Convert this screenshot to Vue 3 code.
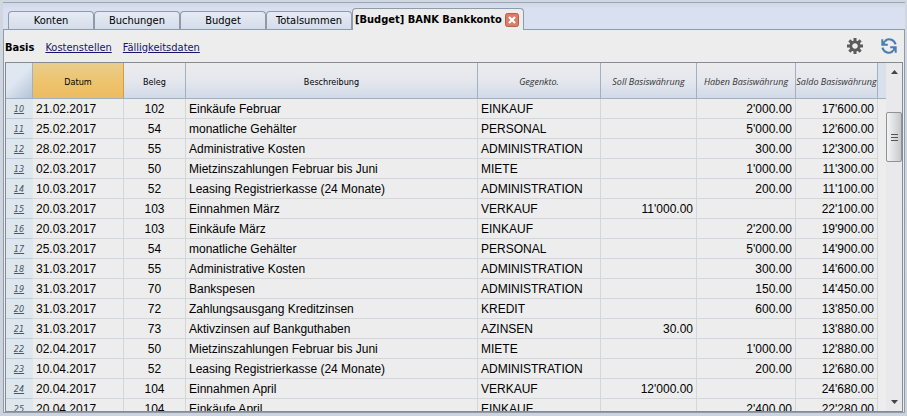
<script setup>
import { ref } from 'vue'

const tabs = ['Konten', 'Buchungen', 'Budget', 'Totalsummen']
const active = ref('[Budget] BANK Bankkonto')

const rows = [
  [10, '21.02.2017', '102', 'Einkäufe Februar', 'EINKAUF', '', "2'000.00", "17'600.00"],
  [11, '25.02.2017', '54', 'monatliche Gehälter', 'PERSONAL', '', "5'000.00", "12'600.00"],
  [12, '28.02.2017', '55', 'Administrative Kosten', 'ADMINISTRATION', '', '300.00', "12'300.00"],
  [13, '02.03.2017', '50', 'Mietzinszahlungen Februar bis Juni', 'MIETE', '', "1'000.00", "11'300.00"],
  [14, '10.03.2017', '52', 'Leasing Registrierkasse (24 Monate)', 'ADMINISTRATION', '', '200.00', "11'100.00"],
  [15, '20.03.2017', '103', 'Einnahmen März', 'VERKAUF', "11'000.00", '', "22'100.00"],
  [16, '20.03.2017', '103', 'Einkäufe März', 'EINKAUF', '', "2'200.00", "19'900.00"],
  [17, '25.03.2017', '54', 'monatliche Gehälter', 'PERSONAL', '', "5'000.00", "14'900.00"],
  [18, '31.03.2017', '55', 'Administrative Kosten', 'ADMINISTRATION', '', '300.00', "14'600.00"],
  [19, '31.03.2017', '70', 'Bankspesen', 'ADMINISTRATION', '', '150.00', "14'450.00"],
  [20, '31.03.2017', '72', 'Zahlungsausgang Kreditzinsen', 'KREDIT', '', '600.00', "13'850.00"],
  [21, '31.03.2017', '73', 'Aktivzinsen auf Bankguthaben', 'AZINSEN', '30.00', '', "13'880.00"],
  [22, '02.04.2017', '50', 'Mietzinszahlungen Februar bis Juni', 'MIETE', '', "1'000.00", "12'880.00"],
  [23, '10.04.2017', '52', 'Leasing Registrierkasse (24 Monate)', 'ADMINISTRATION', '', '200.00', "12'680.00"],
  [24, '20.04.2017', '104', 'Einnahmen April', 'VERKAUF', "12'000.00", '', "24'680.00"],
  [25, '20.04.2017', '104', 'Einkäufe April', 'EINKAUF', '', "2'400.00", "22'280.00"]
]
</script>

<template>
  <div class="window">
    <nav class="tabs">
      <button v-for="t in tabs" :key="t" type="button" class="tab">{{ t }}</button>
      <div class="tab current">
        <button type="button" class="label">{{ active }}</button>
        <button type="button" class="close">
          <svg viewBox="0 0 14 14" width="14" height="14">
            <rect x="0.5" y="0.5" width="13" height="13" rx="2" fill="#dc7d68" stroke="#bd5b48" />
            <path d="M4 4l6 6M10 4l-6 6" stroke="#fff" stroke-width="2.2" />
          </svg>
        </button>
      </div>
    </nav>

    <main class="panel">
      <header class="toolbar">
        <strong>Basis</strong>
        <a href="#kostenstellen">Kostenstellen</a>
        <a href="#faelligkeit">Fälligkeitsdaten</a>
        <span class="spacer"></span>
        <button type="button" class="tool">
          <svg viewBox="-8 -8 16 16" width="16" height="16">
            <g fill="#5c5c5c">
              <rect v-for="a in 8" :key="a" x="-1.5" y="-8" width="3" height="5" :transform="`rotate(${a * 45})`" />
            </g>
            <circle r="4.2" fill="none" stroke="#5c5c5c" stroke-width="2.8" />
          </svg>
        </button>
        <button type="button" class="tool">
          <svg viewBox="0 0 16 16" width="16" height="16">
            <g fill="none" stroke="#4a7fae" stroke-width="2">
              <path d="M4.6 2.4C8.4 0 13.2 1.6 14.6 6.4" />
              <path d="M11.4 13.6C7.6 16 2.8 14.4 1.4 9.6" />
              <path d="M1.3 1.2V6.7H6.8" />
              <path d="M14.7 14.8V9.3H9.2" />
            </g>
            <path d="M1 6.8L1.6 4 4.8 1.4 6 3 3.6 4.8 5 7z" fill="#4a7fae" />
            <path d="M15 9.2L14.4 12 11.2 14.6 10 13 12.4 11.2 11 9z" fill="#4a7fae" />
          </svg>
        </button>
      </header>

      <section class="grid">
        <div class="sheet">
          <table>
            <colgroup>
              <col class="c-num" /><col class="c-date" /><col class="c-doc" /><col />
              <col class="c-acc" /><col class="c-debit" /><col class="c-credit" /><col class="c-bal" /><col class="c-end" />
            </colgroup>
            <thead>
              <tr>
                <th class="corner"></th>
                <th class="picked">Datum</th>
                <th>Beleg</th>
                <th>Beschreibung</th>
                <th class="calc">Gegenkto.</th>
                <th class="calc">Soll Basiswährung</th>
                <th class="calc">Haben Basiswährung</th>
                <th class="calc">Saldo Basiswährung</th>
                <th class="end"></th>
              </tr>
            </thead>
            <tbody>
              <tr v-for="r in rows" :key="r[0]">
                <td class="num">{{ r[0] }}</td>
                <td>{{ r[1] }}</td>
                <td class="mid">{{ r[2] }}</td>
                <td>{{ r[3] }}</td>
                <td>{{ r[4] }}</td>
                <td class="amount">{{ r[5] }}</td>
                <td class="amount">{{ r[6] }}</td>
                <td class="amount">{{ r[7] }}</td>
                <td class="end"></td>
              </tr>
            </tbody>
          </table>
        </div>
        <div class="scrollbar">
          <button type="button" class="arrow"><svg viewBox="0 0 7 4" width="7" height="4"><path d="M0 4h7L3.5 0z" fill="#444" /></svg></button>
          <div class="track">
            <div class="thumb"><i></i><i></i><i></i></div>
          </div>
          <button type="button" class="arrow"><svg viewBox="0 0 7 4" width="7" height="4"><path d="M0 0h7L3.5 4z" fill="#444" /></svg></button>
        </div>
      </section>
    </main>
  </div>
</template>

<style>
body {
  background: #ccd3dc;
}
</style>

<style scoped>
.window {
  box-sizing: border-box;
  height: 100vh;
  display: flex;
  flex-direction: column;
  padding: 2px 2px 3px 3px;
  background: linear-gradient(#d0d7e0, #ccd3dc);
  font-family: "DejaVu Sans Condensed", "DejaVu Sans", sans-serif;
  font-size: 11px;
  color: #000;
}
button {
  font: inherit;
  color: inherit;
  background: none;
  border: 0;
  padding: 0;
}
.tabs {
  flex: none;
  display: flex;
  align-items: flex-end;
  height: 26px;
  padding-left: 5px;
  border-top: 1px solid #9ba7b5;
  background: linear-gradient(#cfd8e4, #d9e0f0 6px);
}
.tab {
  box-sizing: border-box;
  width: 86px;
  height: 18px;
  border: 1px solid #8e9bab;
  border-bottom: 0;
  border-radius: 4px 4px 0 0;
  background: linear-gradient(#e6ebf3, #d5ddeb);
  line-height: 18px;
  text-align: center;
  white-space: nowrap;
}
.tab.current {
  display: flex;
  align-items: center;
  justify-content: space-between;
  width: 172px;
  height: 22px;
  padding: 0 4px 0 2px;
  margin-bottom: -1px;
  background: #ededed;
  position: relative;
}
.label {
  font-weight: bold;
  line-height: 20px;
}
.close,
.tool {
  display: flex;
}
.panel {
  flex: 1;
  min-height: 0;
  display: flex;
  flex-direction: column;
  border: 1px solid #8e9bab;
  background: #ededed;
}
.toolbar {
  flex: none;
  display: flex;
  align-items: center;
  gap: 11px;
  height: 32px;
  padding: 0 7px 0 1px;
}
.toolbar strong,
.toolbar a {
  padding-top: 2px;
}
.toolbar a {
  color: #15156e;
}
.spacer {
  flex: 1;
}
.tool + .tool {
  margin-left: 7px;
}
.grid {
  flex: 1;
  min-height: 0;
  display: flex;
  margin: 0 1px;
  border: 1px solid #858b93;
}
.sheet {
  flex: 1;
  min-width: 0;
  overflow: hidden;
}
table {
  width: 100%;
  table-layout: fixed;
  border-collapse: separate;
  border-spacing: 0;
}
.c-num { width: 27px; }
.c-date { width: 91px; }
.c-doc { width: 62px; }
.c-acc { width: 123px; }
.c-debit { width: 96px; }
.c-credit { width: 99px; }
.c-bal { width: 82px; }
.c-end { width: 8px; }
th {
  box-sizing: border-box;
  height: 36px;
  padding: 2px 0 0;
  border-right: 1px solid #a3afc3;
  border-bottom: 1px solid #a3afc3;
  background: linear-gradient(#ececee, #e4e7ed 50%, #d2dae8);
  font-size: 9px;
  font-weight: normal;
  text-align: center;
  white-space: nowrap;
}
th.corner {
  background: linear-gradient(135deg, #dfe7f1 45%, #b3c3d8);
}
th.picked {
  border-right-color: #d99a3c;
  background: linear-gradient(#e9cd8d, #edc46f 50%, #eebc60);
}
th.calc {
  font-family: "Open Sans", "Noto Sans", sans-serif;
  font-style: italic;
  color: #333;
}
th.end {
  border-right: 0;
  background: #d8e0ec;
}
td {
  box-sizing: border-box;
  height: 20px;
  padding: 2px 3px 0;
  border-right: 1px solid #d3d6da;
  border-bottom: 1px solid #d3d6da;
  font-family: "Liberation Sans", Arial, sans-serif;
  font-size: 12px;
  line-height: 17px;
  white-space: nowrap;
}
td.num {
  padding: 2px 0 0;
  border-right-color: #dfe7ee;
  border-bottom-color: #bccbda;
  background: #dfe7ee;
  font-family: "DejaVu Sans Condensed", sans-serif;
  font-size: 9px;
  font-style: italic;
  text-align: center;
  text-decoration: underline;
  color: #4c5560;
}
td.mid {
  text-align: center;
}
td.amount {
  text-align: right;
}
td.end {
  padding: 0;
  border-right: 0;
  border-bottom: 0;
}
.scrollbar {
  flex: none;
  display: flex;
  flex-direction: column;
  width: 16px;
  background: #e9e9eb;
}
.arrow {
  display: flex;
  align-items: center;
  justify-content: center;
  height: 18px;
}
.track {
  flex: 1;
  padding-top: 31px;
}
.thumb {
  box-sizing: border-box;
  display: flex;
  flex-direction: column;
  align-items: center;
  justify-content: center;
  gap: 2px;
  height: 50px;
  border: 1px solid #8f9296;
  border-radius: 2px;
  background: linear-gradient(90deg, #f4f4f4, #dedfe1 50%, #c6c8cb);
}
.thumb i {
  width: 7px;
  height: 1px;
  background: #555;
}
</style>
